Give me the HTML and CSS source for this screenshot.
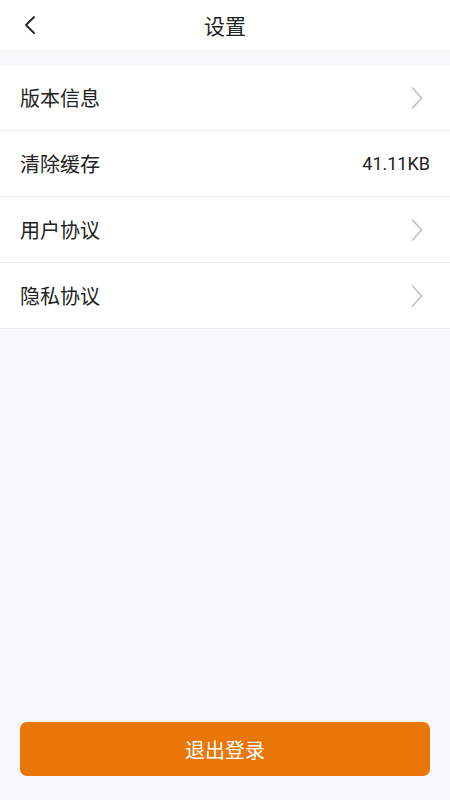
FILE: index.html
```html
<!DOCTYPE html>
<html lang="zh">
<head>
<meta charset="utf-8">
<title>设置</title>
<link rel="stylesheet" href="styles.css">
</head>
<body>
<div class="page">
  <header class="nav">
    <span class="back">
      <svg width="12" height="20" viewBox="0 0 12 20"><path d="M10 2 L2 10 L10 18" fill="none" stroke="#222" stroke-width="1.8" stroke-linecap="round" stroke-linejoin="round"/></svg>
    </span>
    <h1 class="title">设置</h1>
  </header>
  <div class="spacer"></div>
  <ul class="list">
    <li class="row"><span class="label">版本信息</span><svg class="chev" width="12" height="22" viewBox="0 0 12 22"><path d="M1.5 1 L10.5 11 L1.5 21" fill="none" stroke="#bdbdbd" stroke-width="1.5" stroke-linecap="round" stroke-linejoin="round"/></svg></li>
    <li class="row"><span class="label">清除缓存</span><span class="value">41.11KB</span></li>
    <li class="row"><span class="label">用户协议</span><svg class="chev" width="12" height="22" viewBox="0 0 12 22"><path d="M1.5 1 L10.5 11 L1.5 21" fill="none" stroke="#bdbdbd" stroke-width="1.5" stroke-linecap="round" stroke-linejoin="round"/></svg></li>
    <li class="row"><span class="label">隐私协议</span><svg class="chev" width="12" height="22" viewBox="0 0 12 22"><path d="M1.5 1 L10.5 11 L1.5 21" fill="none" stroke="#bdbdbd" stroke-width="1.5" stroke-linecap="round" stroke-linejoin="round"/></svg></li>
  </ul>
  <div class="fill"></div>
  <div class="footer">
    <button class="logout">退出登录</button>
  </div>
</div>
</body>
</html>
```
FILE: styles.css
```css
* { box-sizing: border-box; }
html, body { margin: 0; padding: 0; }
body {
  background: #f8f7fa;
  font-family: "Noto Sans CJK SC", "Noto Sans", sans-serif;
  color: #222;
}
.page {
  width: 450px;
  height: 800px;
  display: flex;
  flex-direction: column;
}
.nav {
  height: 50px;
  background: #fff;
  position: relative;
  display: flex;
  align-items: center;
  justify-content: center;
}
.back {
  position: absolute;
  left: 24px;
  top: 15px;
  display: flex;
}
.title {
  margin: 0;
  font-size: 21px;
  font-weight: 400;
  color: #222;
  line-height: 50px;
}
.spacer { height: 15px; }
.list {
  list-style: none;
  margin: 0;
  padding: 0;
  background: #fff;
}
.row {
  height: 66px;
  display: flex;
  align-items: center;
  justify-content: space-between;
  padding: 0 20px;
  border-bottom: 1px solid #ececee;
}
.label {
  font-size: 20px;
  color: #222;
}
.value {
  font-family: Roboto, "Noto Sans", sans-serif;
  font-size: 18px;
  color: #222;
}
.chev { margin-right: 7px; }
.fill { flex: 1; }
.footer {
  padding: 0 20px 24px;
}
.logout {
  width: 100%;
  height: 54px;
  border: none;
  border-radius: 7px;
  background: #e97607;
  color: #fff;
  font-family: "Noto Sans CJK SC", "Noto Sans", sans-serif;
  font-size: 20px;
  display: flex;
  align-items: center;
  justify-content: center;
}
```
